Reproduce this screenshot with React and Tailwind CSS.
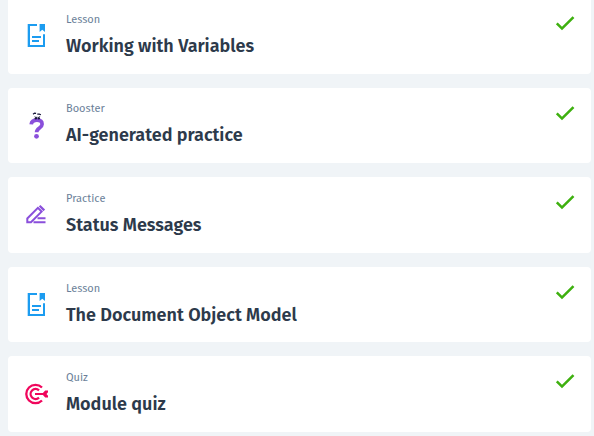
import React from "react";

function LessonIcon() {
  return (
    <svg width="24" height="24" viewBox="0 0 24 24" fill="#1c9cf0" aria-hidden="true">
      <path d="M2.700 0H12v2H5v19h13V10.200h2V23H2.700z" />
      <path d="M14.600 0H20v8l-2.700-2.200L14.600 8z" />
      <path d="M7 12h9v2H7zM7 16h7v2H7z" />
    </svg>
  );
}

function BoosterIcon() {
  return (
    <svg width="24" height="28" viewBox="0 0 24 28" fill="none" aria-hidden="true">
      <path
        d="M6.200 13.400C6.500 10.600 8.800 9.200 12 9.200c3.200 0 5.100 1.600 5.100 4.100 0 3.900-5.500 3.500-5.500 7.900"
        stroke="#8a4fdb"
        strokeWidth="3.700"
      />
      <circle cx="11.500" cy="25.300" r="2.400" fill="#8a4fdb" />
      <path d="M8 3.200l1.500-1.100 1.600.3M12.300 3.200h2l1.600.6" stroke="#16163a" strokeWidth="1.200" />
      <path d="M9.700 5.700l1.300.9 1.200-.6M12.600 6.600l1.200-.3 1.300-.7" stroke="#16163a" strokeWidth="1" />
      <ellipse cx="10.800" cy="7.500" rx="1.300" ry="1" fill="#16163a" />
      <ellipse cx="13.800" cy="7.500" rx="1.300" ry="1" fill="#16163a" />
    </svg>
  );
}

function PracticeIcon() {
  return (
    <svg width="24" height="24" viewBox="0 0 24 24" fill="none" stroke="#8a4fdb" strokeWidth="2" aria-hidden="true">
      <path d="M2.300 19.200v-3.700L12.900 4.900l3.700 3.700L6 19.200z" />
      <path d="M13.800 3.400l1.600-1.500 4.700 4.700L18.500 8.200z" fill="#8a4fdb" stroke="none" />
      <path d="M8.500 19.200h12M12.500 15.200h8" />
    </svg>
  );
}

function QuizIcon() {
  return (
    <svg width="24" height="24" viewBox="0 0 24 24" fill="none" stroke="#f0065c" strokeWidth="2.300" aria-hidden="true">
      <path d="M17 5.500A9.200 9.200 0 1 0 17 18.500" />
      <path d="M14 8.300A5 5 0 1 0 14 15.700" />
      <path d="M10 12h9" strokeWidth="2" />
      <path d="M17 12l3.200-3.500H23v1.700L21.500 12l1.500 1.800v1.700h-2.800z" fill="#f0065c" stroke="none" />
    </svg>
  );
}

function CheckIcon() {
  return (
    <svg width="24" height="24" viewBox="0 0 24 24" fill="#3eb00f" role="img" aria-label="Completed">
      <path d="M9 15.700L4.700 11.400 2.900 13.200 9 19.300 21.400 7 19.600 5.200z" />
    </svg>
  );
}

const items = [
  { type: "Lesson", title: "Working with Variables", Icon: LessonIcon },
  { type: "Booster", title: "AI-generated practice", Icon: BoosterIcon },
  { type: "Practice", title: "Status Messages", Icon: PracticeIcon },
  { type: "Lesson", title: "The Document Object Model", Icon: LessonIcon },
  { type: "Quiz", title: "Module quiz", Icon: QuizIcon },
];

export default function App() {
  return (
    <main className="flex min-h-screen flex-col bg-[#f0f4f7] pr-[3px] pb-1 pl-2 font-['Fira_Sans',Roboto,sans-serif]">
      <ul className="-mt-0.5 flex flex-1 flex-col gap-[14px]">
        {items.map(({ type, title, Icon }) => (
          <li key={title} className="flex flex-1 items-center rounded bg-white pr-[14px] pl-[17px] first:rounded-t-none">
            <div className="flex w-[41px] shrink-0">
              <Icon />
            </div>
            <div className="min-w-0 flex-1 pb-0.5">
              <p className="text-[11px] leading-4 text-[#6b7f99]">{type}</p>
              <h3 className="mt-1.5 text-[18px] leading-6 font-semibold text-[#2d3a4b]">{title}</h3>
            </div>
            <div className="self-start pt-[13px]">
              <CheckIcon />
            </div>
          </li>
        ))}
      </ul>
    </main>
  );
}
